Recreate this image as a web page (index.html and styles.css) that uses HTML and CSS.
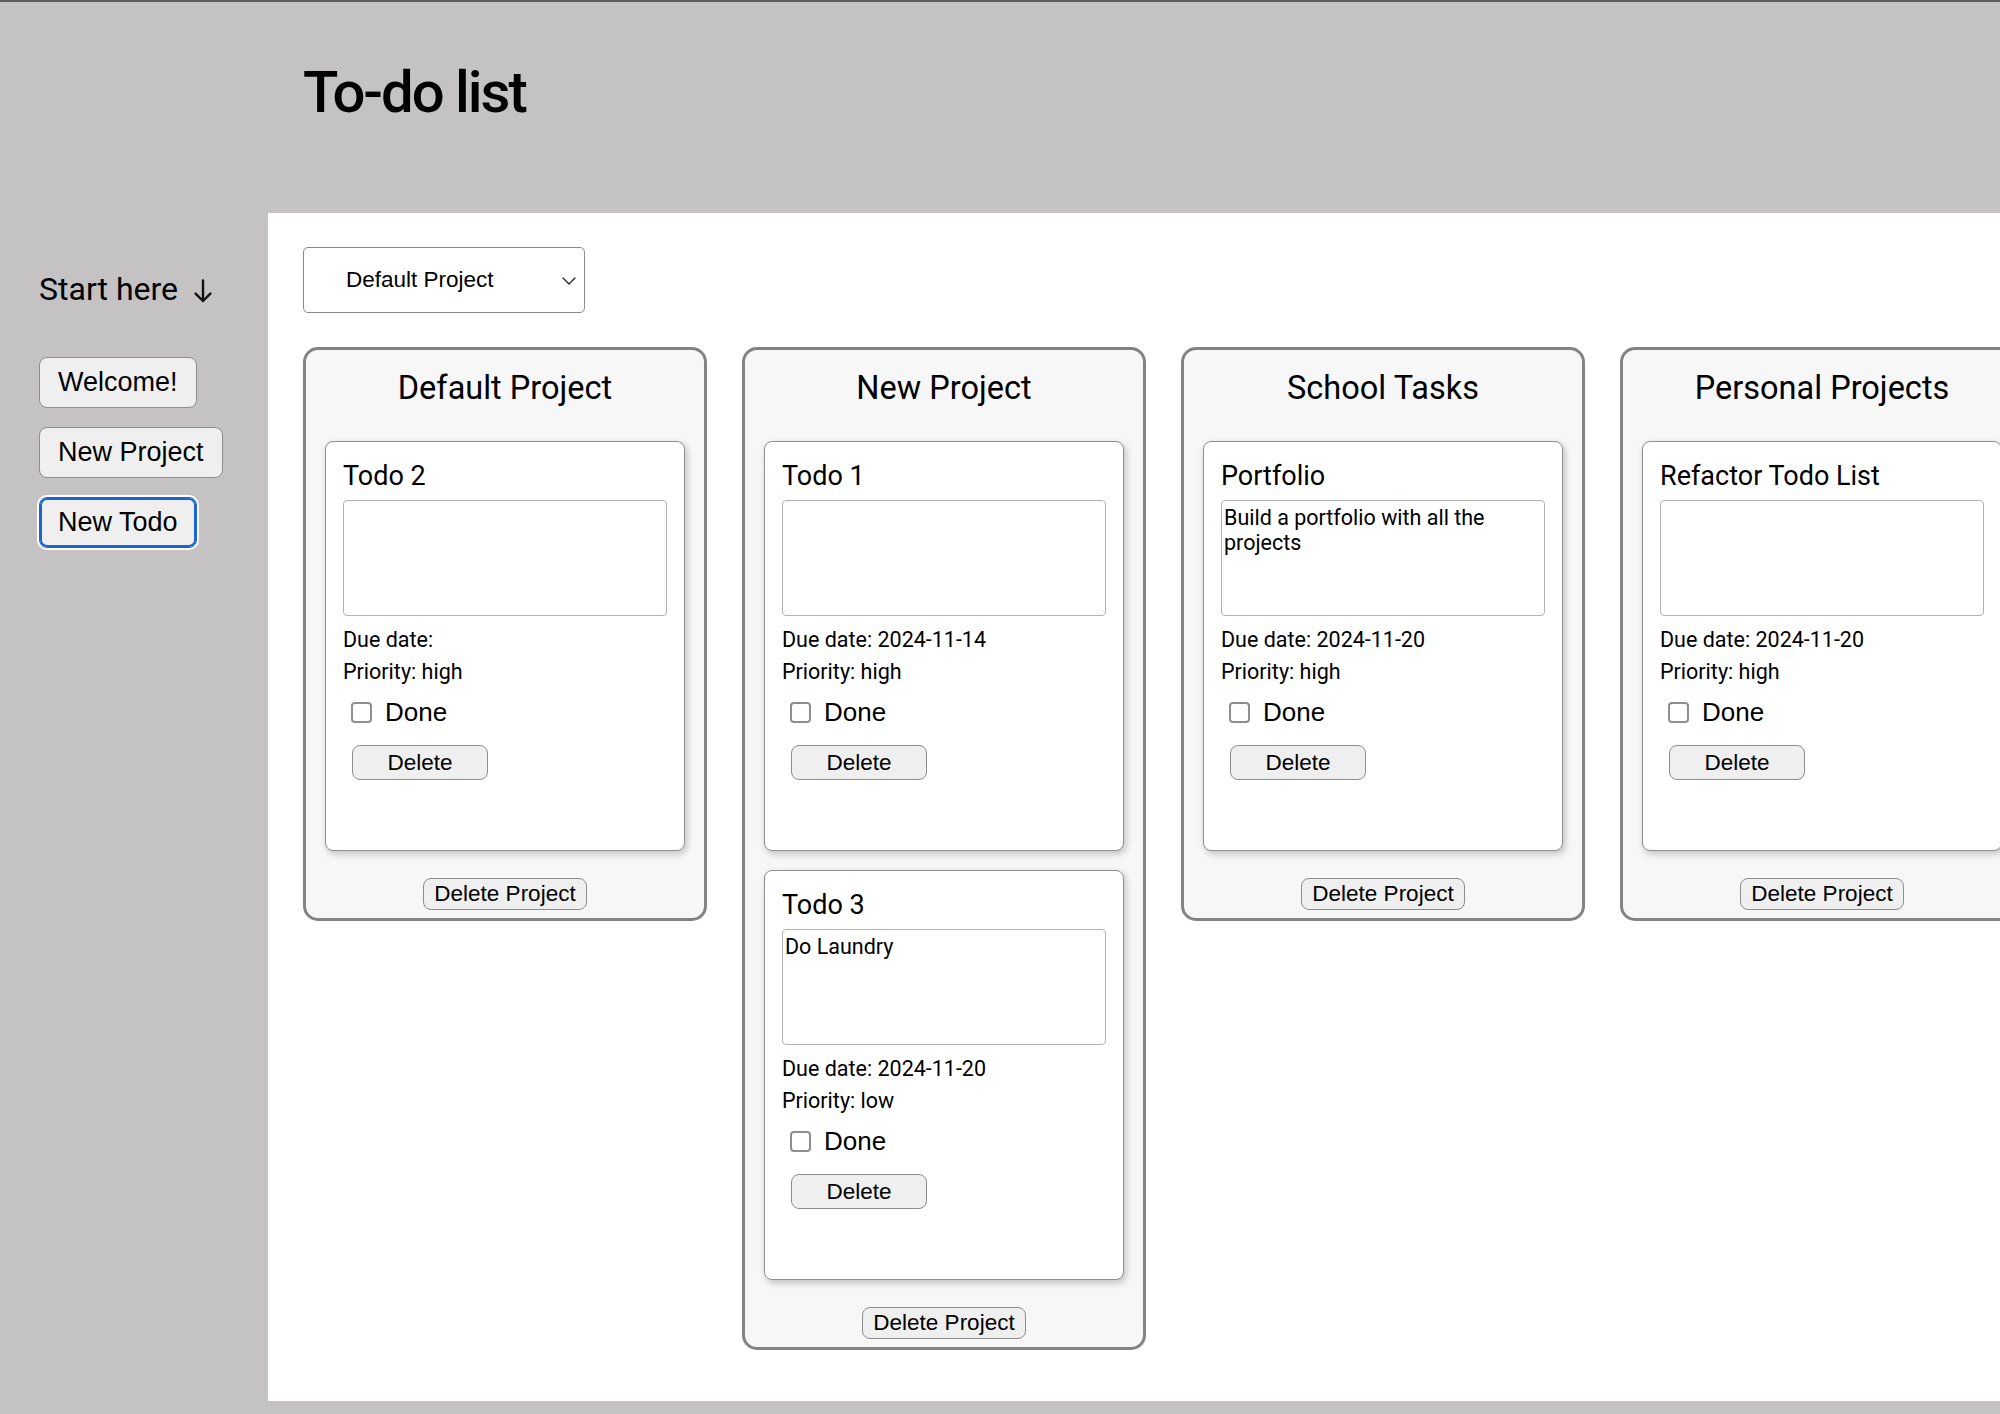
FILE: index.html
```html
<!DOCTYPE html>
<html lang="en">
<head>
<meta charset="utf-8">
<title>To-do list</title>
<link rel="stylesheet" href="styles.css">
</head>
<body>
<div class="page">
  <header class="header">
    <h1 class="title">To-do list</h1>
  </header>

  <aside class="sidebar">
    <div class="start">
      <span class="start-text">Start here</span>
      <svg class="start-arrow" width="20" height="24" viewBox="0 0 20 24" aria-hidden="true">
        <path d="M10 1.5 V22 M2.6 14.6 L10 22 L17.4 14.6" fill="none" stroke="#111" stroke-width="2.4" stroke-linecap="round" stroke-linejoin="round"/>
      </svg>
    </div>
    <nav class="nav">
      <button class="nav-btn" type="button">Welcome!</button>
      <button class="nav-btn" type="button">New Project</button>
      <button class="nav-btn nav-btn--focus" type="button">New Todo</button>
    </nav>
  </aside>

  <main class="main">
    <div class="select">
      <span class="select-text">Default Project</span>
      <svg class="select-chevron" width="14" height="8" viewBox="0 0 14 8" aria-hidden="true">
        <path d="M1 1 L7 7 L13 1" fill="none" stroke="#222" stroke-width="1.3" stroke-linecap="round" stroke-linejoin="round"/>
      </svg>
    </div>

    <div class="projects">
      <section class="project">
        <h2 class="project-title">Default Project</h2>
        <div class="todos">
          <article class="todo">
            <h3 class="todo-title">Todo 2</h3>
            <textarea class="todo-desc"></textarea>
            <div class="todo-line todo-due">Due date: </div>
            <div class="todo-line todo-priority">Priority: high</div>
            <label class="todo-done"><input class="check" type="checkbox"><span class="done-text">Done</span></label>
            <button class="delete-btn" type="button">Delete</button>
          </article>
        </div>
        <button class="project-delete" type="button">Delete Project</button>
      </section>

      <section class="project">
        <h2 class="project-title">New Project</h2>
        <div class="todos">
          <article class="todo">
            <h3 class="todo-title">Todo 1</h3>
            <textarea class="todo-desc"></textarea>
            <div class="todo-line todo-due">Due date: 2024-11-14</div>
            <div class="todo-line todo-priority">Priority: high</div>
            <label class="todo-done"><input class="check" type="checkbox"><span class="done-text">Done</span></label>
            <button class="delete-btn" type="button">Delete</button>
          </article>
          <article class="todo">
            <h3 class="todo-title">Todo 3</h3>
            <textarea class="todo-desc">Do Laundry</textarea>
            <div class="todo-line todo-due">Due date: 2024-11-20</div>
            <div class="todo-line todo-priority">Priority: low</div>
            <label class="todo-done"><input class="check" type="checkbox"><span class="done-text">Done</span></label>
            <button class="delete-btn" type="button">Delete</button>
          </article>
        </div>
        <button class="project-delete" type="button">Delete Project</button>
      </section>

      <section class="project">
        <h2 class="project-title">School Tasks</h2>
        <div class="todos">
          <article class="todo">
            <h3 class="todo-title">Portfolio</h3>
            <textarea class="todo-desc">Build a portfolio with all the projects</textarea>
            <div class="todo-line todo-due">Due date: 2024-11-20</div>
            <div class="todo-line todo-priority">Priority: high</div>
            <label class="todo-done"><input class="check" type="checkbox"><span class="done-text">Done</span></label>
            <button class="delete-btn" type="button">Delete</button>
          </article>
        </div>
        <button class="project-delete" type="button">Delete Project</button>
      </section>

      <section class="project">
        <h2 class="project-title">Personal Projects</h2>
        <div class="todos">
          <article class="todo">
            <h3 class="todo-title">Refactor Todo List</h3>
            <textarea class="todo-desc"></textarea>
            <div class="todo-line todo-due">Due date: 2024-11-20</div>
            <div class="todo-line todo-priority">Priority: high</div>
            <label class="todo-done"><input class="check" type="checkbox"><span class="done-text">Done</span></label>
            <button class="delete-btn" type="button">Delete</button>
          </article>
        </div>
        <button class="project-delete" type="button">Delete Project</button>
      </section>
    </div>
  </main>
</div>
</body>
</html>
```

FILE: styles.css
```css
* {
  box-sizing: border-box;
}

html, body {
  margin: 0;
  padding: 0;
  overflow: hidden;
}

body {
  background: #c4c2c3;
  font-family: Roboto, "Liberation Sans", Arial, sans-serif;
  color: #000;
}

.page {
  display: grid;
  grid-template-columns: 268px 1fr;
  grid-template-rows: 211px 1188px;
  border-top: 2px solid #5b5b5b;
  width: 2000px;
}

/* Header */
.header {
  grid-column: 2;
  grid-row: 1;
  padding: 57px 0 0 35px;
}

.title {
  margin: 0;
  font-family: Roboto, sans-serif;
  font-weight: 500;
  font-size: 58px;
  line-height: 67px;
  letter-spacing: -2px;
}

/* Sidebar */
.sidebar {
  grid-column: 1;
  grid-row: 2;
  padding: 57px 0 0 39px;
}

.start {
  display: flex;
  align-items: center;
  height: 38px;
}

.start-text {
  font-family: Roboto, sans-serif;
  font-size: 32px;
  line-height: 38px;
}

.start-arrow {
  margin-left: 15px;
  margin-top: 3px;
}

.nav {
  display: flex;
  flex-direction: column;
  align-items: flex-start;
  gap: 19px;
  margin-top: 49px;
}

.nav-btn {
  font-family: "Liberation Sans", Arial, sans-serif;
  font-size: 27px;
  line-height: 31px;
  padding: 9px 18px;
  background: #efefef;
  color: #000;
  border: 1px solid #8d8d8d;
  border-radius: 8px;
}

.nav-btn--focus {
  border-color: #1a64d4;
  box-shadow: inset 0 0 0 2px #1a64d4, 0 0 0 2px #ffffff;
}

/* Main */
.main {
  grid-column: 2;
  grid-row: 2;
  background: #ffffff;
  padding: 34px 0 0 35px;
  overflow: hidden;
}

.select {
  display: flex;
  align-items: center;
  width: 282px;
  height: 66px;
  padding: 0 8px 0 42px;
  border: 1px solid #8a8a8a;
  border-radius: 5px;
  background: #fff;
}

.select-text {
  font-family: "Liberation Sans", Arial, sans-serif;
  font-size: 22.5px;
  flex: 1;
}

.select-chevron {
  margin-top: 1px;
}

.projects {
  display: flex;
  align-items: flex-start;
  gap: 35px;
  margin-top: 34px;
}

.project {
  flex: 0 0 404px;
  width: 404px;
  display: flex;
  flex-direction: column;
  align-items: center;
  padding: 19px 19px 8px;
  background: #f7f7f7;
  border: 3px solid #838383;
  border-radius: 15px;
}

.project-title {
  margin: 0 0 34px;
  font-family: Roboto, sans-serif;
  font-weight: 400;
  font-size: 32.5px;
  line-height: 38px;
  text-align: center;
}

.todos {
  display: flex;
  flex-direction: column;
  gap: 19px;
  width: 360px;
}

.todo {
  display: flex;
  flex-direction: column;
  align-items: flex-start;
  width: 360px;
  padding: 18px 17px 70px;
  background: #fff;
  border: 1px solid #8f8f8f;
  border-radius: 8px;
  box-shadow: 2px 3px 7px rgba(0, 0, 0, 0.22);
}

.todo-title {
  margin: 0;
  font-family: Roboto, sans-serif;
  font-weight: 400;
  font-size: 27px;
  line-height: 32px;
}

.todo-desc {
  display: block;
  width: 324px;
  height: 116px;
  margin-top: 8px;
  padding: 4px 2px;
  font-family: Roboto, sans-serif;
  font-size: 21.5px;
  line-height: 25px;
  color: #000;
  border: 1px solid #b3b3b3;
  border-radius: 4px;
  resize: none;
  overflow: hidden;
}

.todo-line {
  font-family: Roboto, sans-serif;
  font-size: 21.5px;
  line-height: 25px;
  white-space: pre;
}

.todo-due {
  margin-top: 11px;
}

.todo-priority {
  margin-top: 7px;
}

.todo-done {
  display: flex;
  align-items: center;
  height: 22px;
  margin-top: 17px;
  padding-left: 8px;
}

.check {
  appearance: none;
  -webkit-appearance: none;
  margin: 0;
  width: 21px;
  height: 21px;
  background: #fff;
  border: 2px solid #8e8e8e;
  border-radius: 4px;
}

.done-text {
  margin-left: 13px;
  font-family: "Liberation Sans", Arial, sans-serif;
  font-size: 26px;
  line-height: 30px;
}

.delete-btn {
  margin: 22px 0 0 9px;
  width: 136px;
  height: 35px;
  padding: 0;
  font-family: "Liberation Sans", Arial, sans-serif;
  font-size: 22.5px;
  color: #000;
  background: #efefef;
  border: 1px solid #8d8d8d;
  border-radius: 8px;
}

.project-delete {
  margin-top: 27px;
  height: 32px;
  padding: 0 10px;
  font-family: "Liberation Sans", Arial, sans-serif;
  font-size: 22.5px;
  line-height: 26px;
  color: #000;
  background: #efefef;
  border: 1px solid #8d8d8d;
  border-radius: 8px;
}
```
